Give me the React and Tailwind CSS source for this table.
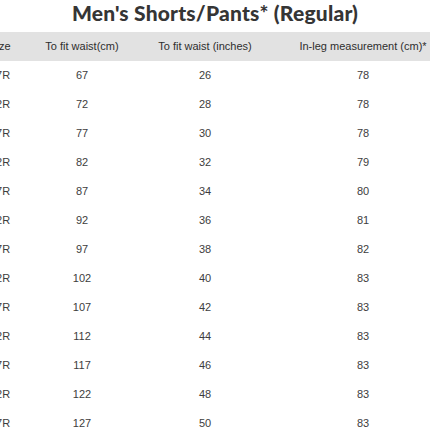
import React from "react";

const rows = [
  ["27R", 67, 26, 78],
  ["32R", 72, 28, 78],
  ["37R", 77, 30, 78],
  ["42R", 82, 32, 79],
  ["47R", 87, 34, 80],
  ["52R", 92, 36, 81],
  ["57R", 97, 38, 82],
  ["62R", 102, 40, 83],
  ["67R", 107, 42, 83],
  ["72R", 112, 44, 83],
  ["77R", 117, 46, 83],
  ["82R", 122, 48, 83],
  ["87R", 127, 50, 83],
];

export default function App() {
  return (
    <div className="w-[430px] h-[430px] overflow-hidden bg-white text-[#333]" style={{ fontFamily: "'Liberation Sans', Arial, sans-serif" }}>
      <h1 className="h-[32px] text-center text-[21px] font-black leading-[26px] text-[#353535] tracking-[0.2px]" style={{ fontFamily: "Lato, sans-serif" }}>
        Men's Shorts/Pants* (Regular)
      </h1>
      <div className="ml-[-40px] w-[480px]">
        <div className="grid grid-cols-[80px_84px_162px_154px] h-[29px] items-center bg-[#e2e2e2] text-[11px] text-[#2e2e2e] text-center">
          <div>Size</div>
          <div>To fit waist(cm)</div>
          <div>To fit waist (inches)</div>
          <div>In-leg measurement (cm)*</div>
        </div>
        {rows.map((r) => (
          <div key={r[0]} className="grid grid-cols-[80px_84px_162px_154px] h-[29px] items-center text-[11px] text-[#3d3d3d] text-center">
            <div>{r[0]}</div>
            <div>{r[1]}</div>
            <div>{r[2]}</div>
            <div>{r[3]}</div>
          </div>
        ))}
      </div>
    </div>
  );
}
